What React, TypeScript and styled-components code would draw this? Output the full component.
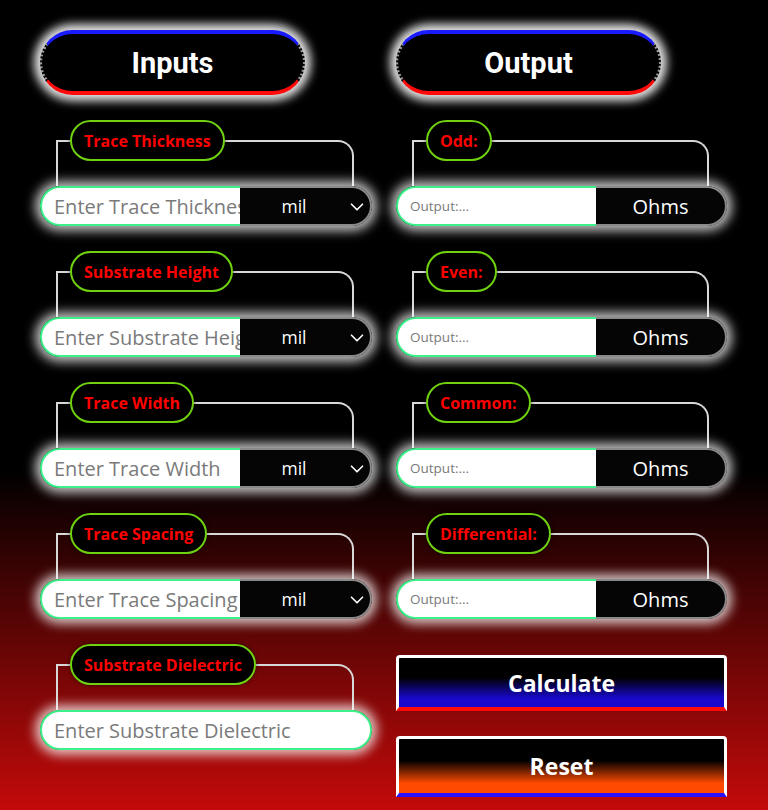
import React from "react";
import styled, { createGlobalStyle } from "styled-components";
import { ChevronDown } from "lucide-react";

const GlobalStyle = createGlobalStyle`
  html, body {
    margin: 0;
    padding: 0;
  }
  body {
    background: linear-gradient(180deg, #000 0%, #000 58%, #c40a0a 100%);
    min-height: 810px;
    font-family: "Open Sans", "Liberation Sans", sans-serif;
  }
  * {
    box-sizing: border-box;
  }
`;

const Page = styled.div`
  min-height: 810px;
  display: grid;
  grid-template-columns: 332px 331px;
  column-gap: 24px;
  padding: 30px 0 0 40px;
`;

const Column = styled.div`
  display: flex;
  flex-direction: column;
  gap: 25px;
`;

const HeaderPill = styled.div`
  width: 265px;
  height: 65px;
  display: flex;
  align-items: center;
  justify-content: center;
  background: #000;
  border-radius: 34px;
  border-top: 4px solid #1a1aff;
  border-bottom: 4px solid #ff0a0a;
  border-left: 2px dotted #999;
  border-right: 2px dotted #999;
  box-shadow: 0 0 10px 6px rgba(255, 255, 255, 0.9);
  color: #fff;
  font-family: Roboto, "Liberation Sans", sans-serif;
  font-weight: 700;
  font-size: 29px;
`;

const Group = styled.div`
  display: flex;
  flex-direction: column;
`;

const Label = styled.div`
  position: relative;
  z-index: 1;
  align-self: flex-start;
  margin-left: 30px;
  height: 41px;
  padding: 0 12px;
  display: flex;
  align-items: center;
  background: #000;
  border: 2px solid #6fd10f;
  border-radius: 21px;
  color: #ff0000;
  font-weight: 700;
  font-size: 16px;
  box-shadow: 0 0 4px rgba(0, 0, 0, 0.6);
`;

const Bracket = styled.div`
  margin: -21px 18px 0 16px;
  height: 46px;
  border-top: 2px solid #d8d8d8;
  border-left: 2px solid #d8d8d8;
  border-right: 2px solid #d8d8d8;
  border-top-right-radius: 16px;
`;

const Row = styled.div`
  display: flex;
  height: 40px;
  border-radius: 20px;
  box-shadow: 0 0 11px 5px rgba(255, 255, 255, 0.75);
`;

const TextInput = styled.input<{ $full?: boolean; $small?: boolean }>`
  width: ${(p) => (p.$full ? "100%" : "200px")};
  height: 40px;
  margin: 0;
  padding: 0 0 0 12px;
  background: #fff;
  border: 2px solid #3cf08a;
  border-right: ${(p) => (p.$full ? "2px solid #3cf08a" : "none")};
  border-radius: ${(p) => (p.$full ? "20px" : "20px 0 0 20px")};
  font-family: "Open Sans", "Liberation Sans", sans-serif;
  font-size: ${(p) => (p.$small ? "13.5px" : "20px")};
  color: #333;
  outline: none;
  &::placeholder {
    color: #7a7a7a;
  }
`;

const UnitBox = styled.div`
  position: relative;
  flex: 1;
  height: 40px;
  display: flex;
  align-items: center;
  justify-content: center;
  background: #050505;
  border: 2px solid #8a8a8a;
  border-left: none;
  border-radius: 0 20px 20px 0;
  color: #fff;
  font-size: 20px;
`;

const UnitSelect = styled.select`
  width: 100%;
  height: 100%;
  padding: 0 22px 0 0;
  appearance: none;
  background: transparent;
  border: none;
  color: #fff;
  font-family: "Open Sans", "Liberation Sans", sans-serif;
  font-size: 17.5px;
  text-align: center;
  text-align-last: center;
  outline: none;
`;

const Chevron = styled(ChevronDown)`
  position: absolute;
  right: 2px;
  top: 8px;
  pointer-events: none;
`;

const ActionButton = styled.button<{ $accent: string; $base: string; $height: number }>`
  height: ${(p) => p.$height}px;
  width: 100%;
  border: 3px solid #fff;
  border-bottom: 4px solid ${(p) => p.$base};
  border-radius: 4px 4px 0 0;
  background: linear-gradient(180deg, #000 0%, #000 40%, ${(p) => p.$accent} 82%, ${(p) => p.$accent} 100%);
  color: #fff;
  font-family: "Open Sans", "Liberation Sans", sans-serif;
  font-weight: 700;
  font-size: 23px;
  cursor: pointer;
`;

const Buttons = styled.div`
  display: flex;
  flex-direction: column;
  gap: 25px;
  margin-top: 11px;
`;

const inputs = [
  { label: "Trace Thickness", placeholder: "Enter Trace Thickness", unit: true },
  { label: "Substrate Height", placeholder: "Enter Substrate Height", unit: true },
  { label: "Trace Width", placeholder: "Enter Trace Width", unit: true },
  { label: "Trace Spacing", placeholder: "Enter Trace Spacing", unit: true },
  { label: "Substrate Dielectric", placeholder: "Enter Substrate Dielectric", unit: false },
];

const outputs = ["Odd:", "Even:", "Common:", "Differential:"];

export default function App() {
  return (
    <>
      <GlobalStyle />
      <Page>
        <Column>
          <HeaderPill>Inputs</HeaderPill>
          {inputs.map((f) => (
            <Group key={f.label}>
              <Label>{f.label}</Label>
              <Bracket />
              <Row>
                <TextInput placeholder={f.placeholder} $full={!f.unit} />
                {f.unit && (
                  <UnitBox>
                    <UnitSelect defaultValue="mil">
                      <option value="mil">mil</option>
                      <option value="mm">mm</option>
                    </UnitSelect>
                    <Chevron size={22} color="#fff" strokeWidth={1.8} />
                  </UnitBox>
                )}
              </Row>
            </Group>
          ))}
        </Column>
        <Column>
          <HeaderPill>Output</HeaderPill>
          {outputs.map((o) => (
            <Group key={o}>
              <Label>{o}</Label>
              <Bracket />
              <Row>
                <TextInput placeholder="Output:..." $small readOnly />
                <UnitBox>Ohms</UnitBox>
              </Row>
            </Group>
          ))}
          <Buttons>
            <ActionButton $accent="#1808cc" $base="#ff0a0a" $height={56}>
              Calculate
            </ActionButton>
            <ActionButton $accent="#ff4a00" $base="#2a10ff" $height={61}>
              Reset
            </ActionButton>
          </Buttons>
        </Column>
      </Page>
    </>
  );
}
